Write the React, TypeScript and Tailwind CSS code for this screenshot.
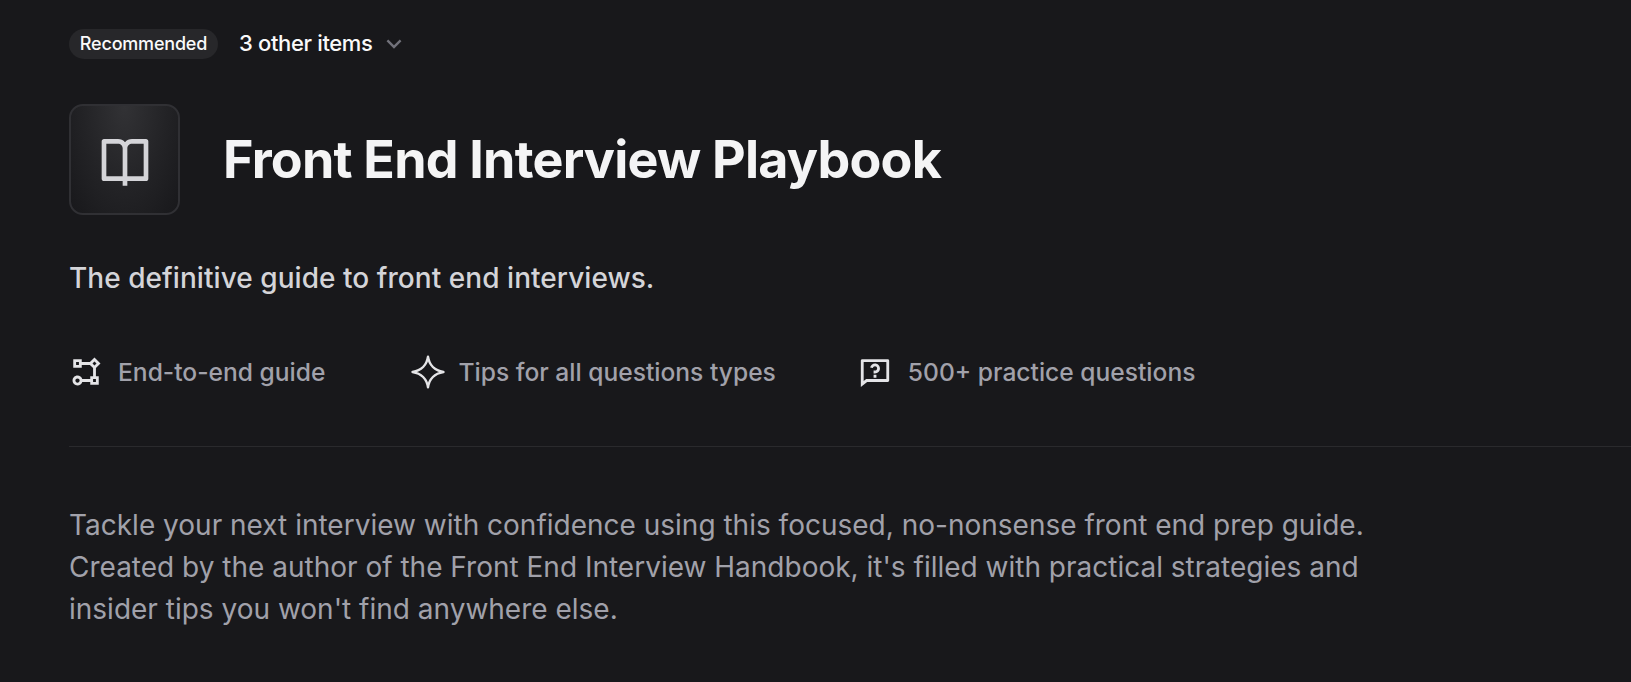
import { RiArrowDownSLine, RiBookOpenLine, RiFlowChart, RiQuestionnaireLine } from "react-icons/ri";

const Sparkle = () => (
  <svg viewBox="0 0 24 24" className="w-8 h-8 shrink-0 overflow-visible" fill="none" stroke="currentColor" strokeWidth="1.8" strokeLinejoin="round">
    <path d="M12 .6C12.9 6.6 17 11 23.6 12 17 13 12.9 17.4 12 23.4 11.1 17.4 7 13 .4 12 7 11 11.1 6.6 12 .6Z" />
  </svg>
);

const features = [
  { icon: <RiFlowChart className="mr-[1px] w-[34px] h-[34px] shrink-0" />, label: "End-to-end guide", spacing: "mr-[4px]" },
  { icon: <Sparkle />, label: "Tips for all questions types", spacing: "-mr-px" },
  { icon: <RiQuestionnaireLine className="mr-[2px] w-[34px] h-[34px] shrink-0" />, label: "500+ practice questions", spacing: "" },
];

export default function App() {
  return (
    <div className="h-[682px] overflow-hidden bg-[#18181b] pl-[69px] pt-[27px] font-['Inter',sans-serif]">
      {/* Top row */}
      <div className="flex items-center gap-[21px]">
        <span className="flex h-[30px] w-[149px] items-center justify-center rounded-full bg-[#27272a] text-[18px] font-medium tracking-[-0.2px] text-[#fafafa]">
          Recommended
        </span>
        <button className="flex items-center gap-[7px] text-[22px] font-medium tracking-[-0.35px] text-[#fafafa]">
          3 other items
          <RiArrowDownSLine className="h-[28px] w-[28px] text-[#71717a]" />
        </button>
      </div>

      {/* Title */}
      <div className="mt-[44px] flex items-center gap-[43px]">
        <div className="flex h-[111px] w-[111px] items-center justify-center rounded-[14px] border-2 border-[#303034] bg-[radial-gradient(ellipse_at_50%_0%,#323235,#232326_55%,#18181b_100%)]">
          <RiBookOpenLine className="h-14 w-14 text-[#d4d4d8]" />
        </div>
        <h1 className="text-[52px] font-bold tracking-[-0.78px] text-[#f4f4f5]">Front End Interview Playbook</h1>
      </div>

      <p className="mt-[44px] text-[28px] font-medium tracking-[0.05px] leading-[38px] text-[#d4d4d8]">
        The definitive guide to front end interviews.
      </p>

      {/* Features */}
      <div className="mt-[57px] flex items-center gap-[83px]">
        {features.map((f) => (
          <div key={f.label} className={`flex items-center gap-[14px] ${f.spacing}`}>
            <span className="text-[#e4e4e7]">{f.icon}</span>
            <span className="text-[24.6px] font-medium text-[#a1a1aa]">{f.label}</span>
          </div>
        ))}
      </div>

      <div className="mt-[55px] h-px bg-[#2a2a2d]" />

      <p className="mt-[57px] w-[1340px] text-[28px] leading-[42px] text-[#a1a1aa]">
        Tackle your next interview with confidence using this focused, no-nonsense front end prep guide.
        <br />
        Created by the author of the Front End Interview Handbook, it's filled with practical strategies and
        <br />
        insider tips you won't find anywhere else.
      </p>
    </div>
  );
}
